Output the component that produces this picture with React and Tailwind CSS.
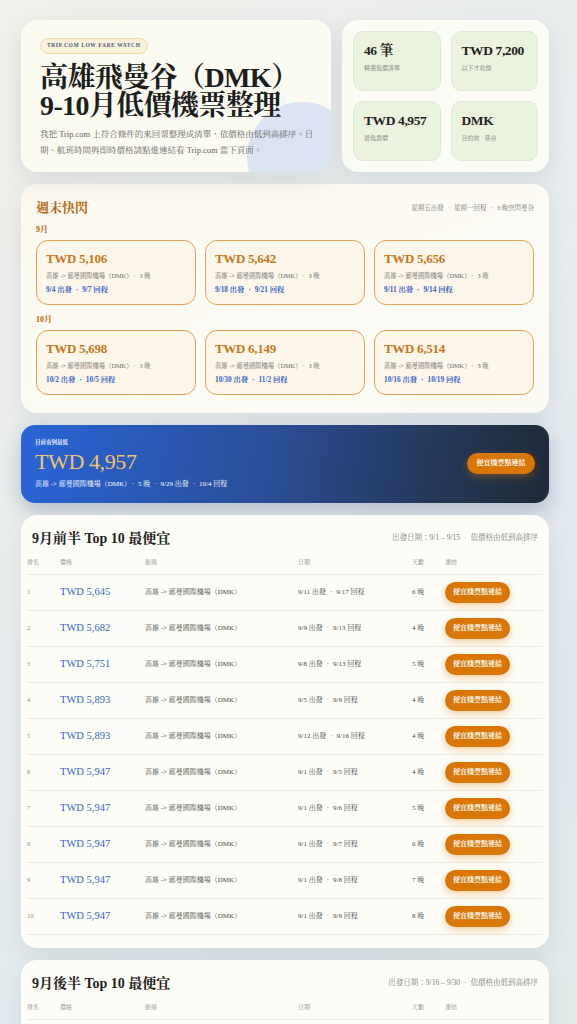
import { useState } from 'react';

const weekend = [
  {
    month: '9月',
    items: [
      { price: '5,106', out: '9/4', back: '9/7' },
      { price: '5,642', out: '9/18', back: '9/21' },
      { price: '5,656', out: '9/11', back: '9/14' },
    ],
  },
  {
    month: '10月',
    items: [
      { price: '5,698', out: '10/2', back: '10/5' },
      { price: '6,149', out: '10/30', back: '11/2' },
      { price: '6,514', out: '10/16', back: '10/19' },
    ],
  },
];

const firstHalf = [
  ['5,645', '9/11', '9/17', 6],
  ['5,682', '9/9', '9/13', 4],
  ['5,751', '9/8', '9/13', 5],
  ['5,893', '9/5', '9/9', 4],
  ['5,893', '9/12', '9/16', 4],
  ['5,947', '9/1', '9/5', 4],
  ['5,947', '9/1', '9/6', 5],
  ['5,947', '9/1', '9/7', 6],
  ['5,947', '9/1', '9/8', 7],
  ['5,947', '9/1', '9/9', 8],
];

const secondHalf = [
  ['5,106', '9/18', '9/21', 3],
  ['5,642', '9/18', '9/21', 3],
  ['5,656', '9/20', '9/24', 4],
  ['5,713', '9/19', '9/23', 4],
  ['5,780', '9/25', '9/29', 4],
];

const ROUTE = '高雄 -> 廊曼國際機場（DMK）';

const Dot = () => <span className="mx-[4px]">·</span>;

const Stat = ({ value, label }) => (
  <div className="rounded-[10px] border border-[#dfe9d3] bg-[#e9f3de] px-[10px] pt-[10px]">
    <div className="whitespace-nowrap text-[13.5px] font-bold leading-[18px] tracking-[-0.4px] text-[#1f2320]">{value}</div>
    <div className="mt-[4px] whitespace-nowrap text-[6px] text-[#7a7f78]">{label}</div>
  </div>
);

const LinkButton = ({ className = '' }) => (
  <a
    href="#"
    className={`inline-flex h-[21px] items-center justify-center rounded-full bg-[#d97706] text-[7px] font-bold text-white shadow-[0_3px_8px_rgba(217,119,6,0.35)] ${className}`}
  >
    便宜機票點連結
  </a>
);

const TopTable = ({ title, range, rows }) => (
  <section className="rounded-[16px] bg-[#fdfdf7] pb-[13px] pt-[13px] shadow-[0_8px_24px_rgba(60,80,70,0.10)]">
    <div className="flex items-center justify-between px-[11px]">
      <h2 className="text-[14px] font-bold text-[#1e2220]">{title}</h2>
      <div className="text-[7.5px] text-[#7b7f7a]">
        {range}
        <Dot />
        依價格由低到高排序
      </div>
    </div>
    <div className="mx-[6px] mt-[2px]">
      <div className="grid h-[24px] grid-cols-[33px_85px_153px_114px_33px_1fr] items-center border-b border-[#ecebe2] text-[6px] text-[#8a8d87]">
        <div>排名</div>
        <div>價格</div>
        <div>航線</div>
        <div>日期</div>
        <div>天數</div>
        <div>連結</div>
      </div>
      {rows.map((r, i) => (
        <div
          key={i}
          className="grid h-[36px] grid-cols-[33px_85px_153px_114px_33px_1fr] items-center border-b border-[#ecebe2] text-[7px] text-[#4a4d49]"
        >
          <div className="text-[6.5px] text-[#8a8d87]">{i + 1}</div>
          <div className="text-[10.5px] text-[#3565c5]">TWD {r[0]}</div>
          <div>{ROUTE}</div>
          <div>
            {r[1]} 出發
            <Dot />
            {r[2]} 回程
          </div>
          <div>{r[3]} 晚</div>
          <div>
            <LinkButton className="w-[65px]" />
          </div>
        </div>
      ))}
    </div>
  </section>
);

export default function App() {
  const [active] = useState(null);

  return (
    <div className="min-h-screen bg-[linear-gradient(135deg,#f1f0ea_0%,#e6ecef_45%,#dfe7ee_70%,#e4ede6_100%)] font-['Liberation_Serif','Noto_Serif_CJK_TC','Noto_Sans_CJK_TC',serif] text-[#1e2220]">
      <div className="ml-[21px] flex w-[528px] flex-col gap-[12px] pb-[20px] pt-[20px]">
        {/* hero */}
        <div className="flex gap-[11px]">
          <div className="relative h-[152px] w-[310px] overflow-hidden rounded-[16px] bg-[#fcfbf2] pl-[19px] pr-[12px] pt-[18px] shadow-[0_8px_24px_rgba(60,70,90,0.12)]">
            <div className="absolute -bottom-[40px] -right-[26px] h-[110px] w-[110px] rounded-full bg-[#dbe3f2]" />
            <div className="relative">
              <div className="flex">
                <span className="flex h-[16px] items-center rounded-full border border-[#efd9a6] bg-[#fbf2da] px-[6px] text-[5.5px] font-bold leading-none tracking-[0.6px] text-[#4a5b8c]">
                  TRIP.COM LOW FARE WATCH
                </span>
              </div>
              <h1 className="mt-[10px] text-[28px] font-bold leading-[28px] tracking-[-0.6px] text-[#1c1e1c]">
                高雄飛曼谷（DMK）
                <br />
                9-10月低價機票整理
              </h1>
              <p className="mt-[6px] text-[8.5px] leading-[16px] text-[#5f625e]">
                我把 Trip.com 上符合條件的來回票整理成清單，依價格由低到高排序。日期、航班時間與即時價格請點進連結看 Trip.com 當下頁面。
              </p>
            </div>
          </div>
          <div className="grid h-[152px] flex-1 grid-cols-2 gap-[10px] rounded-[16px] bg-[#fbfcf6] p-[11px] shadow-[0_8px_24px_rgba(60,70,90,0.12)]">
            <Stat value="46 筆" label="精選低價清單" />
            <Stat value="TWD 7,200" label="以下才收錄" />
            <Stat value="TWD 4,957" label="最低票價" />
            <Stat value="DMK" label="目的地 · 曼谷" />
          </div>
        </div>

        {/* weekend flash */}
        <section className="rounded-[16px] bg-[linear-gradient(160deg,#fcf8ef_0%,#fcfbf5_60%,#fbfaf3_100%)] px-[15px] pb-[18px] pt-[14px] shadow-[0_8px_24px_rgba(60,70,90,0.10)]">
          <div className="flex items-center justify-between">
            <h2 className="text-[13px] font-bold text-[#b4670f]">週末快閃</h2>
            <div className="text-[6.5px] text-[#7b7f7a]">
              星期五出發
              <Dot />
              星期一回程
              <Dot />3 晚快閃曼谷
            </div>
          </div>
          {weekend.map((g, gi) => (
            <div key={g.month} className={gi === 0 ? 'mt-[6px]' : 'mt-[9px]'}>
              <div className="text-[8px] font-bold text-[#b4670f]">{g.month}</div>
              <div className="mt-[4px] grid grid-cols-3 gap-[9px]">
                {g.items.map((it) => (
                  <div
                    key={it.price}
                    className="h-[65px] rounded-[12px] border-[1.5px] border-[#e0a454] bg-[#fdf6ea] px-[9px] pt-[9px]"
                  >
                    <div className="text-[13px] font-bold leading-[18px] tracking-[-0.3px] text-[#c7781a]">TWD {it.price}</div>
                    <div className="mt-[3px] text-[6.3px] text-[#6a6d68]">
                      {ROUTE}
                      <Dot />3 晚
                    </div>
                    <div className="mt-[5px] text-[7.3px] font-bold text-[#3562c4]">
                      {it.out} 出發
                      <Dot />
                      {it.back} 回程
                    </div>
                  </div>
                ))}
              </div>
            </div>
          ))}
        </section>

        {/* lowest banner */}
        <section className="flex h-[78px] items-center justify-between rounded-[14px] bg-[linear-gradient(100deg,#2a64d8_0%,#2b4f9a_45%,#243a5e_75%,#1f2a36_100%)] px-[14px] shadow-[0_8px_20px_rgba(30,50,100,0.25)]">
          <div className="text-white">
            <div className="text-[5.5px] font-bold opacity-90">目前看到最低</div>
            <div className="mt-[3px] text-[22px] leading-[26px] tracking-[-0.4px] text-[#f1c46b]">TWD 4,957</div>
            <div className="mt-[4px] text-[7px]">
              {ROUTE}
              <Dot />5 晚<Dot />
              9/29 出發
              <Dot />
              10/4 回程
            </div>
          </div>
          <LinkButton className="w-[68px]" />
        </section>

        <TopTable title="9月前半 Top 10 最便宜" range="出發日期：9/1 – 9/15" rows={firstHalf} />
        <TopTable title="9月後半 Top 10 最便宜" range="出發日期：9/16 – 9/30" rows={secondHalf} />
      </div>
      {active}
    </div>
  );
}
